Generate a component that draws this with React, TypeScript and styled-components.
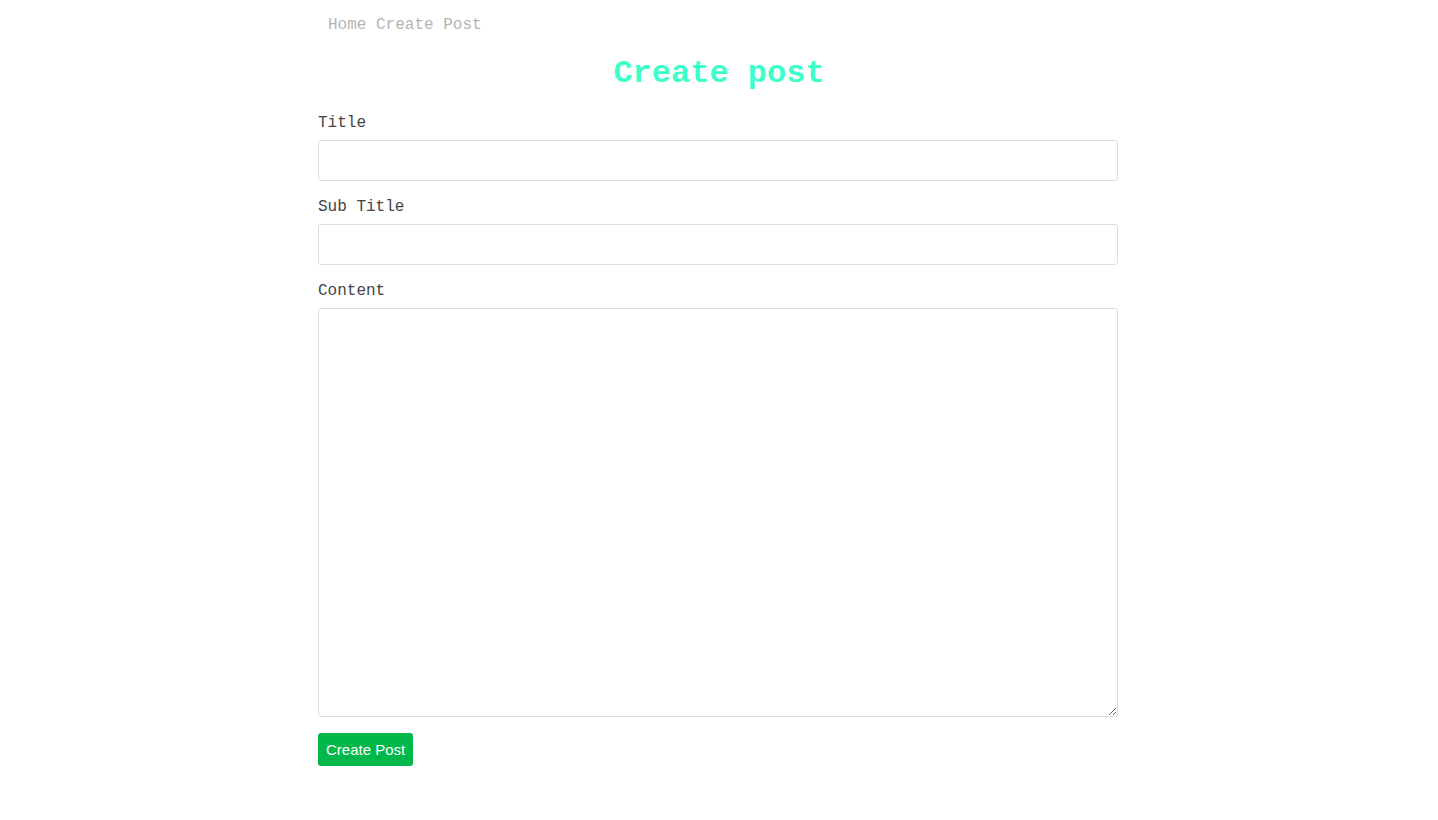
import React from "react";
import styled, { createGlobalStyle } from "styled-components";

const GlobalStyle = createGlobalStyle`
  html, body { margin: 0; padding: 0; background: #fff; }
  body { font-family: "Liberation Mono", "Courier New", monospace; }
  * { box-sizing: border-box; }
`;

const Page = styled.div`
  width: 802px;
  margin: 0 auto;
  display: flex;
  flex-direction: column;
`;

const Nav = styled.nav`
  display: flex;
  gap: 9.6px;
  padding: 16px 10px 0;
  height: 34px;
  line-height: 18px;
`;

const NavLink = styled.a`
  color: #b4b4b4;
  font-size: 16px;
  text-decoration: none;
  font-family: "Liberation Mono", monospace;
`;

const Heading = styled.h1`
  margin: 22px 0 0;
  text-align: center;
  font-size: 32px;
  line-height: 36px;
  font-weight: 700;
  color: #3dffc9;
  font-family: "Liberation Mono", monospace;
`;

const Form = styled.form`
  display: flex;
  flex-direction: column;
  margin-top: 22px;
`;

const Label = styled.label<{ $first?: boolean }>`
  display: block;
  font-size: 16px;
  line-height: 18px;
  color: #444;
  margin-top: ${(p) => (p.$first ? "0" : "17px")};
  margin-bottom: 8px;
  font-family: "Liberation Mono", monospace;
`;

const Input = styled.input`
  width: 800px;
  height: 41px;
  border: 1px solid #ddd;
  border-radius: 3px;
  padding: 8px;
  font-size: 16px;
  outline: none;
`;

const TextArea = styled.textarea`
  width: 800px;
  height: 409px;
  border: 1px solid #ddd;
  border-radius: 3px;
  padding: 8px;
  font-size: 16px;
  outline: none;
  resize: vertical;
`;

const Button = styled.button`
  align-self: flex-start;
  margin-top: 16px;
  height: 33px;
  padding: 0 8px;
  border: none;
  border-radius: 3px;
  background: #00b74a;
  color: #fff;
  font-family: "Liberation Sans", Arial, sans-serif;
  font-size: 15px;
  cursor: pointer;
`;

export default function App() {
  return (
    <>
      <GlobalStyle />
      <Page>
        <Nav>
          <NavLink href="#">Home</NavLink>
          <NavLink href="#">Create Post</NavLink>
        </Nav>
        <Heading>Create post</Heading>
        <Form onSubmit={(e) => e.preventDefault()}>
          <Label $first htmlFor="title">Title</Label>
          <Input id="title" type="text" />
          <Label htmlFor="subtitle">Sub Title</Label>
          <Input id="subtitle" type="text" />
          <Label htmlFor="content">Content</Label>
          <TextArea id="content" />
          <Button type="submit">Create Post</Button>
        </Form>
      </Page>
    </>
  );
}
